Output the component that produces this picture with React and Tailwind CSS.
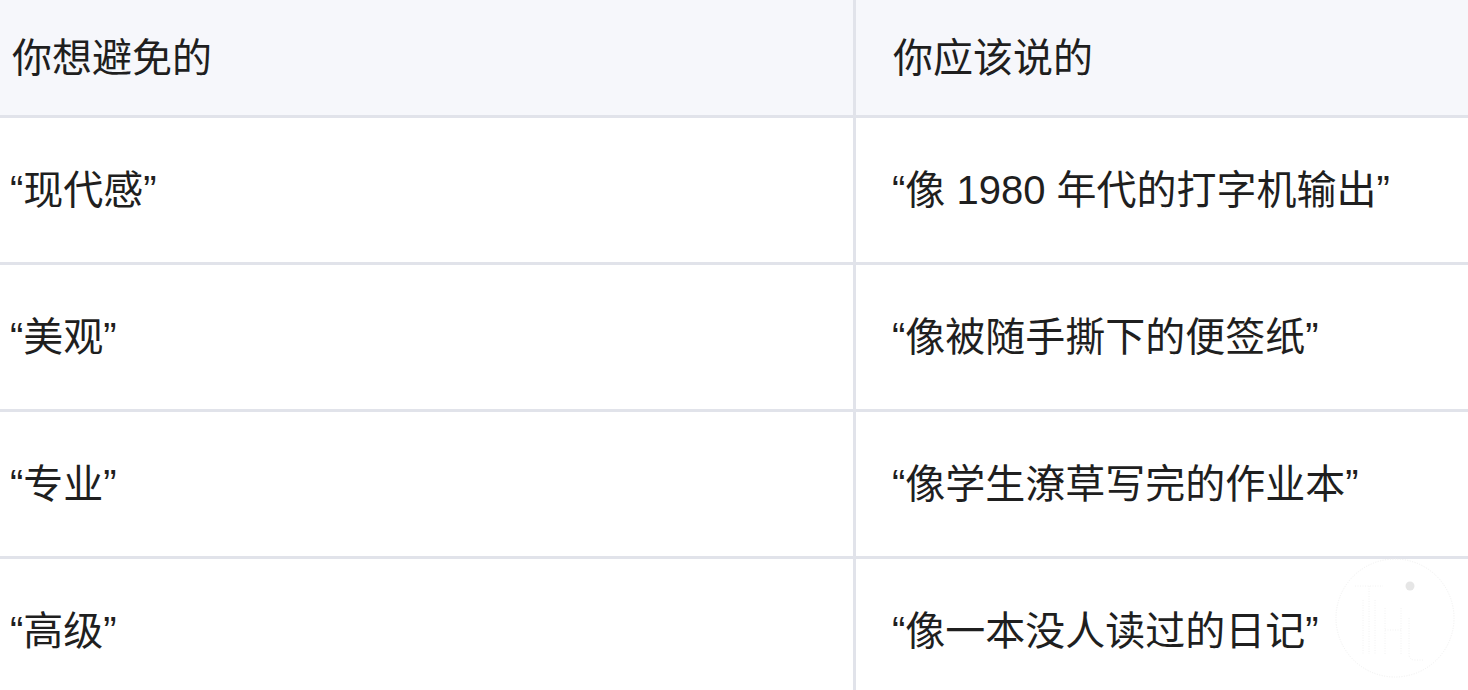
const rows = [
  ["“现代感”", "“像 1980 年代的打字机输出”"],
  ["“美观”", "“像被随手撕下的便签纸”"],
  ["“专业”", "“像学生潦草写完的作业本”"],
  ["“高级”", "“像一本没人读过的日记”"],
];

function Watermark() {
  return (
    <svg className="absolute left-[1333px] top-[556px] pointer-events-none" width="124" height="124" viewBox="0 0 124 124">
      <circle cx="62" cy="62" r="59" fill="none" stroke="#f0f0f0" strokeWidth="1" strokeDasharray="1 1.5" />
      <path d="M22 30 L50 30 M36 30 L36 98 M30 44 L30 98 M42 44 L42 98 M52 52 L52 98 M52 74 L68 74 M68 52 L68 98" fill="none" stroke="#f2f2f2" strokeWidth="1" strokeDasharray="1 1.5" />
      <path d="M76 62 L76 98 Q76 104 82 104 L90 104" fill="none" stroke="#f2f2f2" strokeWidth="1" strokeDasharray="1 1.5" />
      <circle cx="77" cy="30" r="4.5" fill="#e6e6e6" />
    </svg>
  );
}

export default function App() {
  return (
    <div className="relative w-[1468px] h-[690px] overflow-hidden bg-white text-[#1f1f1f] text-[40px]"
      style={{ fontFamily: '"Liberation Sans", "Noto Sans CJK SC", sans-serif' }}>
      <div className="flex h-[118px] bg-[#f6f7fb] border-b-[3px] border-[#e1e3ea]">
        <div className="w-[856px] pl-[12px] flex items-center border-r-[3px] border-[#e1e3ea]">你想避免的</div>
        <div className="flex-1 pl-[37px] flex items-center">你应该说的</div>
      </div>
      {rows.map(([a, b]) => (
        <div key={a} className="flex h-[147px] border-b-[3px] border-[#e1e3ea]">
          <div className="w-[856px] pl-[10px] flex items-center border-r-[3px] border-[#e1e3ea]">{a}</div>
          <div className="flex-1 pl-[36px] flex items-center">{b}</div>
        </div>
      ))}
      <Watermark />
    </div>
  );
}
